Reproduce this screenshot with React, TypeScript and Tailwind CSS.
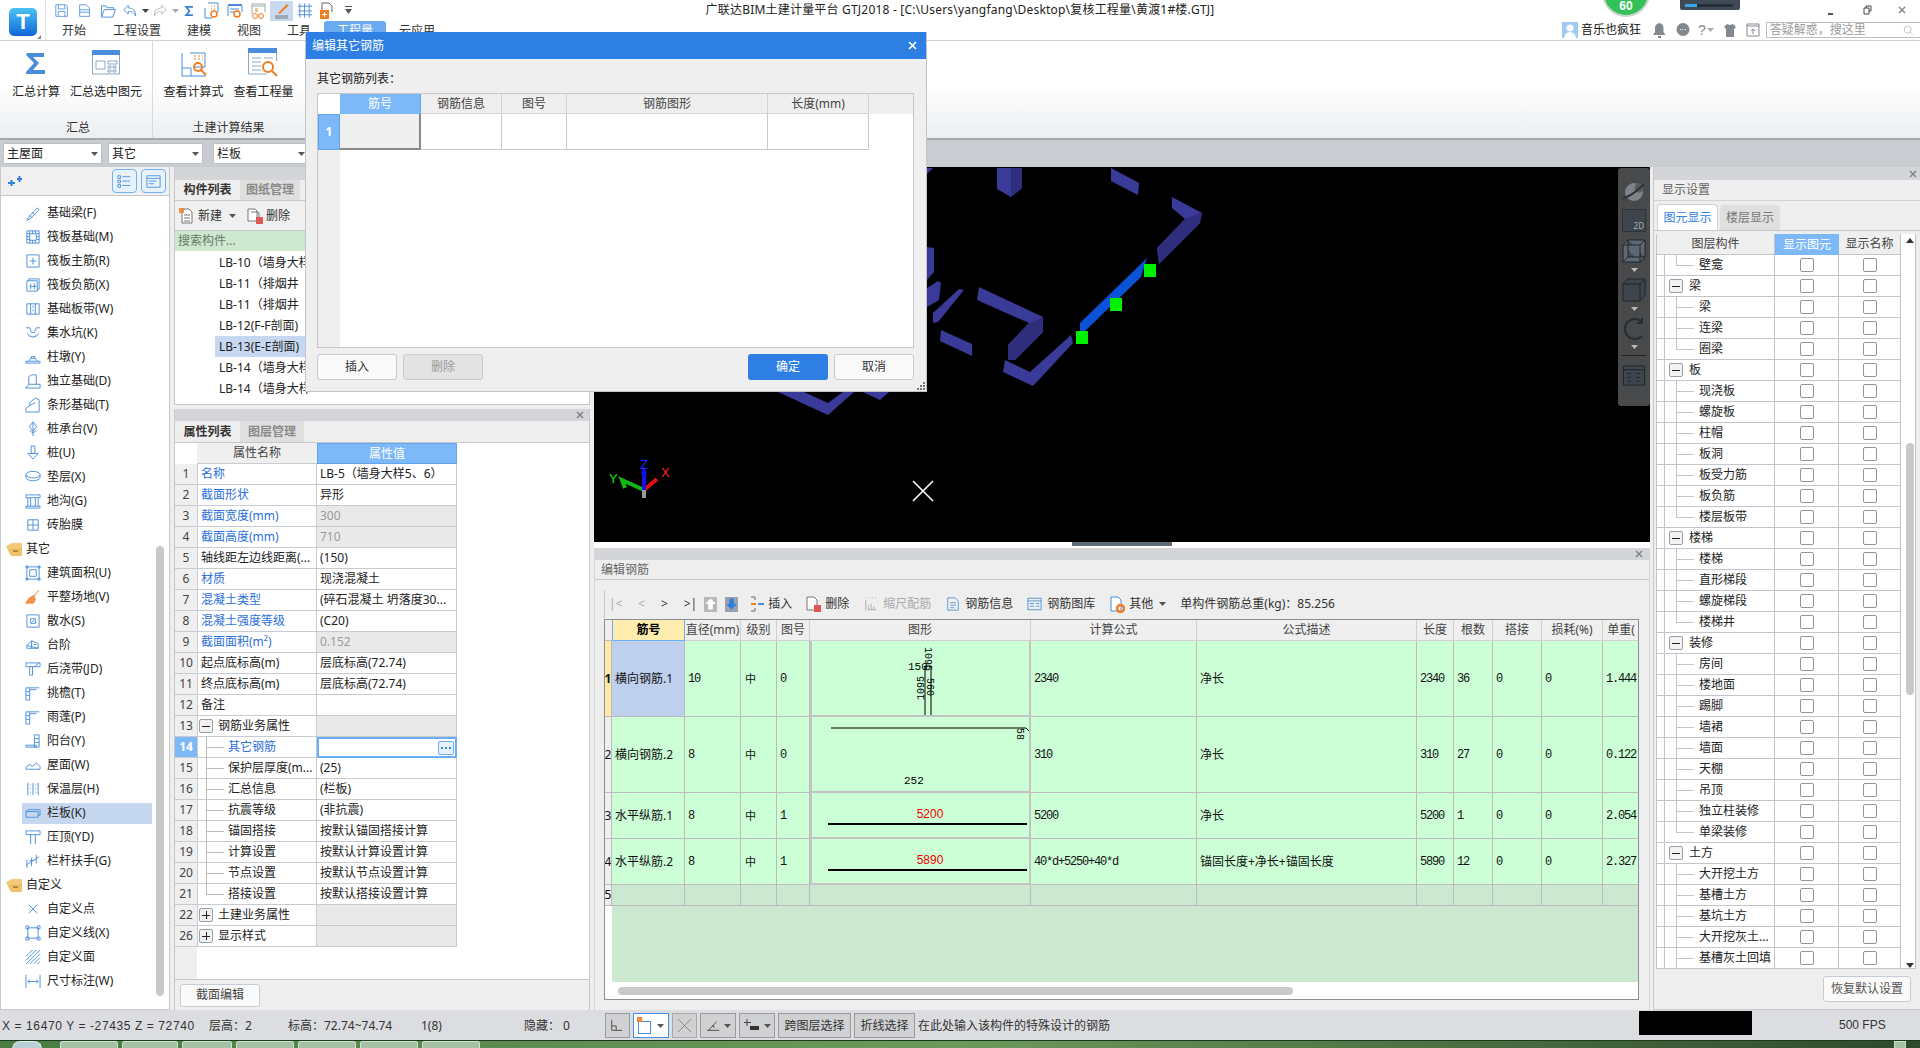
import React from "react";

const BLUE = "#4a8edb";
const ORANGE = "#ef7d22";

function Ic({ d, w = 16, h = 16, vb = "0 0 17 17", c = BLUE, sw = 1, fill = "none", className = "" }: { d: string; w?: number; h?: number; vb?: string; c?: string; sw?: number; fill?: string; className?: string }) {
  return (
    <svg width={w} height={h} viewBox={vb} className={"shrink-0 " + className}>
      <path d={d} fill={fill} stroke={c} strokeWidth={sw} />
    </svg>
  );
}

function Arrow({ c = "#555", className = "" }: { c?: string; className?: string }) {
  return (
    <svg width="7" height="4" viewBox="0 0 7 4" className={"shrink-0 " + className}>
      <path d="M0 0h7L3.5 4z" fill={c} />
    </svg>
  );
}

function CloseX({ className = "" }: { className?: string }) {
  return (
    <svg width="8" height="8" viewBox="0 0 8 8" className={"shrink-0 " + className}>
      <path d="M1 1l6 6M7 1L1 7" stroke="#7b7f86" strokeWidth="1.4" />
    </svg>
  );
}

const navIcons: Record<string, string> = {
  a: "M3 14L13 3l2 2L5 15l-3 1zM5 11l3 3M8 8l3 3",
  b: "M2 2h13v13H2zM5 5h7v7H5zM2 5h3M2 8h3M2 11h3M12 5h3M12 8h3M12 11h3M5 2v3M8 2v3M11 2v3M5 12v3M8 12v3M11 12v3",
  c: "M2 2h13v13H2zM8.5 5v7M5 8.5h7",
  d: "M2 4h11v11H2zM4 4V2h11v11h-2M6 7v6M10 7v6M5 10h7",
  e: "M2 3h13v11H2zM6 3v11M11 3v11M8.5 5v2M8.5 9v2",
  f: "M1 3h4l2 5h3l2-5h4M2 9q6.500 8 13 0M5 11h1M8 12h1M11 11h1",
  g: "M1 13h15v2H1zM4 13l2-3h5l2 3M6.500 10V8h4v2",
  h: "M1 16l3-4h12v4zM4 12V4l3-2h5v10M1 16v-1",
  i: "M1 16v-4l4-3V6l6-5 4 2v13zM5 9l6-3",
  j: "M8.500 1l4 5-4 5-4-5zM8.500 1v15M5 10l3.500 3 3.500-3",
  k: "M6.500 1h4v8h-4zM3 9h11l-5.500 6z",
  l: "M1 6a7.500 3.500 0 0 1 15 0v3a7.500 3.500 0 0 1-15 0zM1 6a7.500 3.500 0 0 0 15 0",
  m: "M1 2h15v3H1zM3 5v9M6 5v9M11 5v9M14 5v9M1 14h15v2H1z",
  n: "M3 3h11v11H3zM8.500 3v11M3 8.500h11",
  o: "M2 2h13v13H2zM5 5h7v7H5zM1 1h2v2H1zM14 1h2v2h-2zM1 14h2v2H1zM14 14h2v2h-2z",
  q: "M2 2h13v13H2zM6 6h5v5H6zM7 10l3-3",
  r: "M2 12V9l5-5 7 3v5zM7 4v8M2 9l12 3M9 8h3",
  s: "M1 2h15v4H1zM5 6v9h3V6M10 6l5-4",
  t: "M1 3h4v13H1zM1 7h4M1 11h4M5 3h10M5 5h7",
  u: "M1 13h11v2H1zM10 2h5v13h-5zM10 6h5M10 10h5",
  v: "M1 11l4-3 3 2 4-4 4 4v3H1z",
  w: "M3 2v13M8.500 2v13M14 2v13M5 4h1M5 8h1M5 12h1M11 4h1M11 8h1M11 12h1",
  x: "M1 7h13v6H1zM14 5h2v6h-2M1 7l2-2h11",
  y: "M1 2h15v4H1zM6 6v10M11 6v10",
  z: "M2 7v9M7 5v9M12 2v9M1 13l14-9M5 8h5",
  A: "M4 4l9 9M13 4l-9 9",
  B: "M3 3h11v11H3zM1 1h3v3H1zM13 1h3v3h-3zM1 13h3v3H1zM13 13h3v3h-3z",
  C: "M1 8l7-7M1 12L12 1M1 16L16 1M5 16L16 5M9 16l7-7M13 16l3-3",
  D: "M1 2v14M16 2v14M3 9h11M3 9l2-2M3 9l2 2M14 9l-2-2M14 9l-2 2",
};

const navData: [string, string][] = [
  ["基础梁(F)", "a"], ["筏板基础(M)", "b"], ["筏板主筋(R)", "c"], ["筏板负筋(X)", "d"], ["基础板带(W)", "e"], ["集水坑(K)", "f"], ["柱墩(Y)", "g"],
  ["独立基础(D)", "h"], ["条形基础(T)", "i"], ["桩承台(V)", "j"], ["桩(U)", "k"], ["垫层(X)", "l"], ["地沟(G)", "m"], ["砖胎膜", "n"],
  ["其它", "F"], ["建筑面积(U)", "o"], ["平整场地(V)", "P"], ["散水(S)", "q"], ["台阶", "r"], ["后浇带(JD)", "s"], ["挑檐(T)", "t"], ["雨蓬(P)", "t"],
  ["阳台(Y)", "u"], ["屋面(W)", "v"], ["保温层(H)", "w"], ["栏板(K)", "x"], ["压顶(YD)", "y"], ["栏杆扶手(G)", "z"],
  ["自定义", "F"], ["自定义点", "A"], ["自定义线(X)", "B"], ["自定义面", "C"], ["尺寸标注(W)", "D"],
];

function Folder() {
  return (
    <svg width="17" height="13" viewBox="0 0 17 13" className="shrink-0">
      <path d="M0 3l6-3h10v12H4z" fill="#f2c97a" />
      <path d="M3 5h13v8H5z" fill="#eec06a" />
      <path d="M7 7h5v2H7z" fill="#b98a38" />
    </svg>
  );
}

function Nav() {
  return (
    <div className="w-[170px] shrink-0 bg-white border-r border-l border-b border-[#c6c8cc] flex flex-col relative">
      <div className="h-[29px] bg-[#f0f0f0] border-b border-[#c6c8cc] flex items-center pl-[7px]">
        <svg width="14" height="11" viewBox="0 0 14 11" className="shrink-0">
          <path d="M0 7h7M3.500 4v6M9 3h5M11.500 0v6" stroke="#2f7fdc" strokeWidth="2" />
        </svg>
        <div className="ml-[90px] w-[25px] h-[24px] rounded-[4px] border border-[#6fb3f5] bg-[#e8f2fc] flex items-center justify-center">
          <Ic d="M1 2h3v3H1zM1 7h3v3H1zM1 12h3v3H1zM6 3h9M6 8h9M6 13h9" w={15} h={15} />
        </div>
        <div className="ml-[4px] w-[25px] h-[24px] rounded-[4px] border border-[#6fb3f5] bg-[#e8f2fc] flex items-center justify-center">
          <Ic d="M1 2h15v13H1zM1 5h15M3 8h9M3 11h6" w={15} h={15} />
        </div>
      </div>
      <div className="flex flex-col pt-[5px]">
        {navData.map(([t, k]) => {
          if (k === "F")
            return (
              <div key={t} className="h-[24px] flex items-center pl-[5px] text-[12px] text-[#222]">
                <Folder />
                <span className="ml-[3px]">{t}</span>
              </div>
            );
          const sel = t === "栏板(K)";
          return (
            <div key={t} className={"h-[24px] flex items-center pl-[21px] text-[12px] text-[#222]"}>
              <div className={"w-[130px] h-[21px] flex items-center pl-[3px] " + (sel ? "bg-[#c6d8f0]" : "")}>
                {k === "P" ? (
                  <Ic d="M15 1L9 8M9 7L4 10l-3 5h8l2-4z" c={ORANGE} fill="#f29552" />
                ) : (
                  <Ic d={navIcons[k]} />
                )}
                <span className="ml-[6px] whitespace-nowrap">{t}</span>
              </div>
            </div>
          );
        })}
      </div>
      <div className="absolute left-[155px] top-[379px] w-[8px] h-[450px] rounded-[4px] bg-[#c9c9c9]" />
    </div>
  );
}

const listItems = ["LB-10（墙身大样", "LB-11（排烟井", "LB-11（排烟井", "LB-12(F-F剖面)", "LB-13(E-E剖面)", "LB-14（墙身大样", "LB-14（墙身大样"];

function MemberPanel() {
  return (
    <div className="h-[238px] shrink-0 bg-white border border-[#c6c8cc] border-t-0 flex flex-col">
      <div className="h-[13px] bg-[#d3d5d9]" />
      <div className="h-[21px] bg-[#eeeeee] border-b border-[#c6c8cc] flex text-[12px]">
        <div className="w-[65px] h-full flex items-center justify-center font-bold text-[#333]">构件列表</div>
        <div className="w-[60px] h-full flex items-center justify-center bg-[#dfdfdf] text-[#8a8a8a] font-bold">图纸管理</div>
      </div>
      <div className="h-[30px] pt-[1px] bg-[#f0f0f0] border-b border-[#c6c8cc] flex items-center pl-[4px] text-[12px] text-[#333]">
        <svg width="16" height="16" viewBox="0 0 16 16" className="shrink-0">
          <path d="M3 1h7l3 3v11H3zM5 7h6M5 10h6M5 13h6" fill="#fff" stroke="#777" />
          <path d="M0 0h5v5H0z" fill={ORANGE} opacity=".8" />
        </svg>
        <span className="ml-[3px]">新建</span>
        <Arrow className="ml-[7px]" />
        <svg width="16" height="16" viewBox="0 0 16 16" className="ml-[11px] shrink-0">
          <path d="M1 1h7l2 2v10H1z" fill="#fff" stroke="#777" />
          <path d="M4 4h7l1 1v5" fill="none" stroke="#777" />
          <rect x="9" y="9" width="7" height="7" fill="#e05555" />
        </svg>
        <span className="ml-[3px]">删除</span>
      </div>
      <div className="h-[20px] bg-[#cde8cf] flex items-center pl-[3px] text-[12px] text-[#6a7a6a]">搜索构件...</div>
      <div className="flex flex-col pl-[40px] pt-[1px] text-[12px] text-[#222]">
        {listItems.map((t, i) => (
          <div key={i} className={"h-[21px] flex items-center pl-[4px] whitespace-nowrap " + (i === 4 ? "bg-[#c6d8f0]" : "")}>
            {t}
          </div>
        ))}
      </div>
    </div>
  );
}

type P = { n: string; name: string; val?: string; blue?: boolean; grey?: boolean; kind?: "minus" | "plus" | "leaf" | "last"; sel?: boolean };
const props: P[] = [
  { n: "1", name: "名称", val: "LB-5（墙身大样5、6）", blue: true },
  { n: "2", name: "截面形状", val: "异形", blue: true },
  { n: "3", name: "截面宽度(mm)", val: "300", blue: true, grey: true },
  { n: "4", name: "截面高度(mm)", val: "710", blue: true, grey: true },
  { n: "5", name: "轴线距左边线距离(...", val: "(150)" },
  { n: "6", name: "材质", val: "现浇混凝土", blue: true },
  { n: "7", name: "混凝土类型", val: "(碎石混凝土 坍落度30...", blue: true },
  { n: "8", name: "混凝土强度等级", val: "(C20)", blue: true },
  { n: "9", name: "截面面积(m²)", val: "0.152", blue: true, grey: true },
  { n: "10", name: "起点底标高(m)", val: "层底标高(72.74)" },
  { n: "11", name: "终点底标高(m)", val: "层底标高(72.74)" },
  { n: "12", name: "备注", val: "" },
  { n: "13", name: "钢筋业务属性", kind: "minus", grey: true },
  { n: "14", name: "其它钢筋", kind: "leaf", blue: true, sel: true },
  { n: "15", name: "保护层厚度(m...", val: "(25)", kind: "leaf" },
  { n: "16", name: "汇总信息", val: "(栏板)", kind: "leaf" },
  { n: "17", name: "抗震等级", val: "(非抗震)", kind: "leaf" },
  { n: "18", name: "锚固搭接", val: "按默认锚固搭接计算", kind: "leaf" },
  { n: "19", name: "计算设置", val: "按默认计算设置计算", kind: "leaf" },
  { n: "20", name: "节点设置", val: "按默认节点设置计算", kind: "leaf" },
  { n: "21", name: "搭接设置", val: "按默认搭接设置计算", kind: "last" },
  { n: "22", name: "土建业务属性", kind: "plus", grey: true },
  { n: "26", name: "显示样式", kind: "plus", grey: true },
];

function Box({ plus = false, className = "" }: { plus?: boolean; className?: string }) {
  return (
    <div className={"w-[14px] h-[14px] shrink-0 rounded-[2px] border border-[#9ba0a6] bg-[#f2f2f2] flex items-center justify-center relative " + className}>
      <div className="w-[8px] h-[1px] bg-[#222]" />
      {plus && <div className="absolute w-[1px] h-[8px] bg-[#222]" />}
    </div>
  );
}

function PropRow({ p }: { p: P }) {
  const isLeaf = p.kind === "leaf" || p.kind === "last";
  return (
    <div className="grid grid-cols-[22px_120px_140px] w-[282px] h-[21px] text-[12px] leading-[20px]">
      <div className={"border-b border-[#c8ccd2] flex items-center justify-center " + (p.sel ? "bg-[#7db8f9] text-white font-bold" : "bg-[#efefef] text-[#444]")}>{p.n}</div>
      <div className={"border-b border-r border-l border-[#c8ccd2] bg-white flex items-center whitespace-nowrap overflow-hidden h-[21px] " + (p.blue ? "text-[#2b6fdc]" : "text-[#222]")}>
        {isLeaf && (
          <>
            <div className={"ml-[8px] w-[1px] bg-[#bbb] " + (p.kind === "last" ? "h-[11px] self-start" : "h-[21px]")} />
            <div className="w-[17px] h-[1px] bg-[#bbb]" />
            <span className="ml-[4px]">{p.name}</span>
          </>
        )}
        {(p.kind === "minus" || p.kind === "plus") && (
          <>
            <Box plus={p.kind === "plus"} className="ml-[1px]" />
            <span className="ml-[5px]">{p.name}</span>
          </>
        )}
        {!p.kind && <span className="ml-[3px]">{p.name}</span>}
      </div>
      {p.sel ? (
        <div className="border-2 border-[#6aaef5] bg-white flex items-center justify-end pr-[1px]">
          <div className="w-[16px] h-[14px] rounded-[2px] border border-[#6aaef5] bg-[#e8f2fc] flex items-center justify-center gap-[2px]">
            <div className="w-[2px] h-[2px] bg-[#3b82d8]" />
            <div className="w-[2px] h-[2px] bg-[#3b82d8]" />
            <div className="w-[2px] h-[2px] bg-[#3b82d8]" />
          </div>
        </div>
      ) : (
        <div className={"border-b border-r border-[#c8ccd2] flex items-center pl-[3px] whitespace-nowrap overflow-hidden " + (p.grey ? "bg-[#e9e9e9] text-[#9a9a9a]" : "bg-white text-[#222]")}>{p.val}</div>
      )}
    </div>
  );
}

function PropPanel() {
  return (
    <div className="flex-1 flex flex-col bg-[#eeeeee] border-x border-[#c6c8cc] min-h-0">
      <div className="h-[12px] bg-[#d3d5d9] flex items-center justify-end pr-[5px]">
        <CloseX />
      </div>
      <div className="h-[22px] bg-[#eeeeee] border-b border-[#c6c8cc] flex text-[12px]">
        <div className="w-[65px] h-full flex items-center justify-center font-bold text-[#333]">属性列表</div>
        <div className="w-[64px] h-full flex items-center justify-center bg-[#dfdfdf] text-[#8a8a8a] font-bold">图层管理</div>
      </div>
      <div className="h-[537px] bg-white border-b border-[#c6c8cc] flex flex-col relative">
        <div className="absolute left-0 top-0 bottom-0 w-[22px] bg-[#efefef]" />
        <div className="grid grid-cols-[22px_120px_140px] w-[282px] h-[21px] text-[12px] relative">
          <div className="bg-white" />
          <div className="bg-[#efefef] border-b border-[#c8ccd2] flex items-center justify-center text-[#444]">属性名称</div>
          <div className="bg-[#7db8f9] text-white flex items-center justify-center border border-[#62a3ee]">属性值</div>
        </div>
        <div className="flex flex-col relative">
          {props.map((p) => (
            <PropRow key={p.n} p={p} />
          ))}
        </div>
      </div>
      <div className="flex-1 flex items-center pl-[5px]">
        <div className="w-[80px] h-[23px] rounded-[3px] border border-[#c4ccd8] bg-[#fafafa] flex items-center justify-center text-[12px] text-[#444]">截面编辑</div>
      </div>
    </div>
  );
}

function Scene() {
  const main = "#3a3a98";
  const dark = "#2e2e7c";
  return (
    <svg viewBox="594 167 1056 375" width="1056" height="375" className="block">
      <rect x="594" y="167" width="1056" height="375" fill="#000" />
      <path d="M997 168h25v20l-11 9-14-8z" fill={main} />
      <path d="M1011 168h11v20l-11 9z" fill={dark} />
      <path d="M927 168h6l-6 6z" fill={main} />
      <path d="M1111 168l28 15-1 12-27-14z" fill={main} />
      <path d="M1172 197l30 16-2 10-41 41-2-16 28-29-13-11z" fill={main} />
      <path d="M1200 223l-41 41-2-16 28-29 16-6z" fill={dark} />
      <path d="M1147 258l-6 19-57 55h-4v-9z" fill="#0b52d6" />
      <path d="M1071 335l2 8-40 43-30-14 2-12 25 12z" fill={main} />
      <path d="M979 287l64 30v15l-28 28h-7v-15l21-22-52-23z" fill={main} />
      <path d="M1043 317v15l-28 28h-7v-15l21-22z" fill={dark} />
      <path d="M941 330l31 14v12l-32-15z" fill={main} />
      <path d="M959 289l5 1-26 32-5 1v-10z" fill={main} />
      <path d="M927 247l7 1v24l-7 8z" fill={main} />
      <path d="M927 288l11-7 3 2-2 17-12 7z" fill={main} />
      <path d="M778 392l50 23 26-23h-11l-15 11-24-11z" fill={main} />
      <path d="M863 392l17 8 9-8z" fill={main} />
      <rect x="1144" y="264" width="12" height="13" fill="#00f000" />
      <rect x="1110" y="298" width="12" height="13" fill="#00f000" />
      <rect x="1076" y="331" width="12" height="13" fill="#00f000" />
      <path d="M644 490l-22-10 3 8" fill="none" stroke="#12b812" strokeWidth="4" />
      <path d="M644 490l13-11" fill="none" stroke="#e01010" strokeWidth="4" />
      <path d="M644 498v-8" stroke="#999" strokeWidth="4" />
      <path d="M644 490v-16" stroke="#1212e8" strokeWidth="4" />
      <path d="M644 466l-3 8h6z" fill="#1212e8" />
      <text x="609" y="483" fontSize="13" fill="#10e010" fontFamily="Liberation Sans">Y</text>
      <text x="640" y="469" fontSize="13" fill="#2222ff" fontFamily="Liberation Sans">Z</text>
      <text x="661" y="477" fontSize="13" fill="#ff2020" fontFamily="Liberation Sans">X</text>
      <path d="M913 481l20 20M933 481l-20 20" stroke="#fff" strokeWidth="1.6" />
    </svg>
  );
}

function ToolStrip() {
  return (
    <div className="absolute right-0 top-[1px] w-[32px] h-[238px] bg-[#47494b] rounded-[3px] flex flex-col items-center pt-[13px]">
      <svg width="26" height="22" viewBox="0 0 26 22" className="shrink-0">
        <circle cx="13" cy="11" r="9" fill="#7d8388" />
        <circle cx="18" cy="7" r="4.500" fill="#555b60" />
        <path d="M2 17Q10 16 23 3" stroke="#2f3235" strokeWidth="2" fill="none" />
      </svg>
      <div className="mt-[6px] w-[24px] h-[23px] border border-[#2f3234] bg-[#3e454c] rounded-[1px] flex items-end justify-end pr-[1px] text-[8px] leading-[10px] text-[#aab0b5]">2D</div>
      <Ic d="M1 6l5-5h17v17l-5 5H1zM1 6h17v17M18 6l5-5M6 1v17h17M6 18l-5 5" w={24} h={24} vb="0 0 24 24" c="#20262b" fill="#5d6873" className="mt-[7px]" />
      <Arrow c="#bbb" className="mt-[5px]" />
      <Ic d="M1 6l5-5h17v17l-5 5H1zM1 6h17v17M18 6l5-5" w={24} h={24} vb="0 0 24 24" c="#20262b" fill="#3e454c" className="mt-[6px]" />
      <Arrow c="#bbb" className="mt-[5px]" />
      <Ic d="M20 5A10 10 0 1 0 20 19M20 1v5h-5" w={24} h={24} vb="0 0 24 24" c="#2a2d30" sw={2} className="mt-[6px]" />
      <Arrow c="#bbb" className="mt-[4px]" />
      <div className="mt-[6px] w-[24px] h-[1px] bg-[#222]" />
      <Ic d="M1 3h22v20H1zM1 7h22M5 11h4M14 11h4M5 15h4M14 15h4M5 19h4M14 19h4" w={24} h={23} vb="0 0 24 24" c="#20262b" fill="#3e454c" className="mt-[7px]" />
    </div>
  );
}

const cols = "grid grid-cols-[7px_73px_56px_36px_33px_221px_166px_220px_37px_39px_49px_61px_37px] w-[1035px]";
const cellB = "border-r border-b border-[#bcbcbc] flex items-center overflow-hidden whitespace-nowrap";
const mono = "font-['Liberation_Mono','Noto_Sans_CJK_SC',monospace] text-[12px] tracking-[-1.2px]";

type G = { id: string; name: string; d: string; lvl: string; fig: string; f: string; desc: string; len: string; cnt: string; w: string; shape: React.ReactNode };

const gridRows: G[] = [
  {
    id: "1", name: "横向钢筋.1", d: "10", lvl: "中", fig: "0", f: "2340", desc: "净长", len: "2340", cnt: "36", w: "1.444",
    shape: (
      <svg viewBox="811 640 220 75" width="220" height="75" className="block">
        <path d="M924 665v49M930 665v49M924 665h6" stroke="#000" fill="none" />
        <text x="907" y="669" fontSize="11" fontFamily="Liberation Mono">150</text>
        <text transform="translate(924,646) rotate(90)" fontSize="10" fontFamily="Liberation Mono">1095</text>
        <text transform="translate(923,699) rotate(-90)" fontSize="10" fontFamily="Liberation Mono">1095</text>
        <text transform="translate(926,677) rotate(90)" fontSize="10" fontFamily="Liberation Mono">560</text>
      </svg>
    ),
  },
  {
    id: "2", name: "横向钢筋.2", d: "8", lvl: "中", fig: "0", f: "310", desc: "净长", len: "310", cnt: "27", w: "0.122",
    shape: (
      <svg viewBox="811 716 220 75" width="220" height="75" className="block">
        <path d="M830 727h195l3 3" stroke="#000" fill="none" />
        <text transform="translate(1016,727) rotate(90)" fontSize="10" fontFamily="Liberation Mono">58</text>
        <text x="903" y="783" fontSize="11" fontFamily="Liberation Mono">252</text>
      </svg>
    ),
  },
  {
    id: "3", name: "水平纵筋.1", d: "8", lvl: "中", fig: "1", f: "5200", desc: "净长", len: "5200", cnt: "1", w: "2.054",
    shape: (
      <svg viewBox="811 792 220 45" width="220" height="45" className="block">
        <text x="929" y="817" fontSize="12" fill="#f00000" textAnchor="middle" fontFamily="Liberation Sans">5200</text>
        <path d="M827 823h199" stroke="#000" strokeWidth="2" />
      </svg>
    ),
  },
  {
    id: "4", name: "水平纵筋.2", d: "8", lvl: "中", fig: "1", f: "40*d+5250+40*d", desc: "锚固长度+净长+锚固长度", len: "5890", cnt: "12", w: "2.327",
    shape: (
      <svg viewBox="811 838 220 45" width="220" height="45" className="block">
        <text x="929" y="863" fontSize="12" fill="#f00000" textAnchor="middle" fontFamily="Liberation Sans">5890</text>
        <path d="M827 869h199" stroke="#000" strokeWidth="2" />
      </svg>
    ),
  },
];

const heads = ["筋号", "直径(mm)", "级别", "图号", "图形", "计算公式", "公式描述", "长度", "根数", "搭接", "损耗(%)", "单重("];

function EditGrid() {
  return (
    <div className="flex-1 ml-[9px] mr-[10px] border border-[#8b8e93] bg-white flex flex-col min-h-0 overflow-hidden">
      <div className={cols + " h-[21px] text-[12px] text-[#444] bg-[#efefef]"}>
        <div className="border-b border-[#bcbcbc]" />
        {heads.map((h, i) => (
          <div key={h} className={"border-r border-b flex items-center justify-center overflow-hidden whitespace-nowrap " + (i === 0 ? "bg-[#ffedb0] border-[#6aaef5] border-l text-black font-bold" : "border-[#d0d0d0]")}>{h}</div>
        ))}
      </div>
      {gridRows.map((r, i) => (
        <div key={r.id} className={cols + " text-[12px] text-[#111] bg-[#ccffd6] " + (i < 2 ? "h-[76px]" : "h-[46px]")}>
          <div className={cellB + " justify-center font-bold " + (i === 0 ? "bg-[#ffe9a8]" : "bg-[#efefef] font-normal")}>{r.id}</div>
          <div className={cellB + " pl-[3px] " + (i === 0 ? "bg-[#bfd0ee]" : "")}>{r.name}</div>
          <div className={cellB + " pl-[3px] " + mono}>{r.d}</div>
          <div className={cellB + " pl-[4px] text-[11px]"}>{r.lvl}</div>
          <div className={cellB + " pl-[3px] " + mono}>{r.fig}</div>
          <div className="border-2 border-[#c4c4c4] border-t-0 overflow-hidden">{r.shape}</div>
          <div className={cellB + " pl-[3px] " + mono}>{r.f}</div>
          <div className={cellB + " pl-[3px]"}>{r.desc}</div>
          <div className={cellB + " pl-[3px] " + mono}>{r.len}</div>
          <div className={cellB + " pl-[3px] " + mono}>{r.cnt}</div>
          <div className={cellB + " pl-[3px] " + mono}>0</div>
          <div className={cellB + " pl-[3px] " + mono}>0</div>
          <div className={cellB + " pl-[3px] " + mono}>{r.w}</div>
        </div>
      ))}
      <div className={cols + " h-[21px] text-[12px] bg-[#cde8d0]"}>
        <div className={cellB + " bg-[#efefef] justify-center"}>5</div>
        {Array.from({ length: 12 }).map((_, i) => (
          <div key={i} className="border-r border-b border-[#bcbcbc]" />
        ))}
      </div>
      <div className="flex-1 ml-[7px] bg-[#cde8d0]" />
      <div className="h-[17px] shrink-0 flex items-center pl-[13px]">
        <div className="w-[675px] h-[8px] rounded-[4px] bg-[#c9c9c9]" />
      </div>
    </div>
  );
}

function EditToolbar() {
  return (
    <div className="h-[39px] shrink-0 flex items-center pt-[9px] pl-[9px] text-[12px] text-[#333] whitespace-nowrap">
      <div className="w-[1px] h-[28px] bg-[#c8c8c8] mr-[4px]" />
      <span className="text-[#aaa] w-[12px]">|&lt;</span>
      <span className="text-[#aaa] ml-[17px]">&lt;</span>
      <span className="text-[#333] ml-[16px]">&gt;</span>
      <span className="text-[#333] ml-[16px]">&gt;|</span>
      <div className="ml-[7px] w-[13px] h-[15px] bg-[#b8b8b8] flex items-center justify-center">
        <Ic d="M6 1l5 5H8v6H4V6H1z" w={11} h={12} vb="0 0 12 13" c="#fff" fill="#fff" />
      </div>
      <div className="ml-[8px] w-[13px] h-[15px] bg-[#9aa3ad] flex items-center justify-center">
        <Ic d="M4 1h4v6h3l-5 5-5-5h3z" w={11} h={12} vb="0 0 12 13" c="#2f7fdc" fill="#2f7fdc" />
      </div>
      <svg width="14" height="16" viewBox="0 0 14 16" className="ml-[12px] shrink-0">
        <path d="M1 1h4v3M1 15h4v-3" stroke="#666" fill="none" />
        <path d="M1 8h5" stroke={ORANGE} strokeWidth="2" />
        <path d="M8 8h6" stroke="#4a8edb" strokeWidth="2" />
      </svg>
      <span className="ml-[4px]">插入</span>
      <svg width="15" height="16" viewBox="0 0 15 16" className="ml-[14px] shrink-0">
        <path d="M1 1h7l3 3v10H1z" stroke="#777" fill="#fff" />
        <rect x="8" y="9" width="7" height="7" fill="#e05555" />
      </svg>
      <span className="ml-[4px]">删除</span>
      <Ic d="M2 4v12M2 1v1M5 1h1M9 1h1M13 1v1M5 15V10M8 15V8M11 15v-4M14 15h-9" w={15} h={16} c="#aaa" className="ml-[15px]" />
      <span className="ml-[4px] text-[#aaa]">缩尺配筋</span>
      <Ic d="M2 1h9l4 4v11H2zM5 7h7M5 10h7M5 13h5" w={14} h={16} className="ml-[15px]" />
      <span className="ml-[5px]">钢筋信息</span>
      <Ic d="M1 2h15v13H1zM1 5h15M3 8h5M3 11h5M10 8h4M10 11h4" w={15} h={16} className="ml-[14px]" />
      <span className="ml-[5px]">钢筋图库</span>
      <svg width="15" height="17" viewBox="0 0 15 17" className="ml-[15px] shrink-0">
        <path d="M1 1h7l3 3v11H1z" stroke={BLUE} fill="#fff" />
        <circle cx="10.500" cy="12.500" r="3.500" fill="none" stroke={ORANGE} strokeWidth="2.500" />
      </svg>
      <span className="ml-[4px]">其他</span>
      <Arrow className="ml-[6px]" />
      <span className="ml-[14px]">单构件钢筋总重(kg)：85.256</span>
    </div>
  );
}

function EditPanel() {
  return (
    <div className="flex-1 bg-[#eeeeee] flex flex-col min-h-0 border-x border-[#d6d6d6]">
      <div className="h-[12px] shrink-0 bg-[#d3d5d9] flex items-center justify-end pr-[6px]">
        <CloseX />
      </div>
      <div className="h-[20px] shrink-0 border-b border-[#c6c8cc] flex items-center pl-[6px] text-[12px] text-[#666]">编辑钢筋</div>
      <EditToolbar />
      <EditGrid />
      <div className="h-[10px] shrink-0" />
    </div>
  );
}

const layerRows: [string, "g" | "l" | "e"][] = [
  ["壁龛", "e"], ["梁", "g"], ["梁", "l"], ["连梁", "l"], ["圈梁", "e"], ["板", "g"], ["现浇板", "l"], ["螺旋板", "l"], ["柱帽", "l"], ["板洞", "l"], ["板受力筋", "l"], ["板负筋", "l"], ["楼层板带", "e"],
  ["楼梯", "g"], ["楼梯", "l"], ["直形梯段", "l"], ["螺旋梯段", "l"], ["楼梯井", "e"], ["装修", "g"], ["房间", "l"], ["楼地面", "l"], ["踢脚", "l"], ["墙裙", "l"], ["墙面", "l"], ["天棚", "l"], ["吊顶", "l"], ["独立柱装修", "l"], ["单梁装修", "e"],
  ["土方", "g"], ["大开挖土方", "l"], ["基槽土方", "l"], ["基坑土方", "l"], ["大开挖灰土...", "l"], ["基槽灰土回填", "l"],
];

function Check() {
  return <div className="w-[14px] h-[14px] rounded-[2px] border border-[#8f959b] bg-white" />;
}

function RightPanel() {
  return (
    <div className="w-[267px] ml-[3px] shrink-0 bg-[#eeeeee] border-l border-b border-[#c6c8cc] flex flex-col">
      <div className="h-[13px] shrink-0 bg-[#d3d5d9] flex items-center justify-end pr-[3px]">
        <CloseX />
      </div>
      <div className="h-[21px] shrink-0 border-b border-[#d0d2d6] flex items-center pl-[8px] text-[12px] text-[#666]">显示设置</div>
      <div className="h-[30px] shrink-0 pt-[5px] pl-[3px] flex items-end border-b border-[#c6c8cc] text-[12px]">
        <div className="w-[61px] h-[26px] bg-white rounded-t-[4px] border border-b-0 border-[#d0d2d6] flex items-center justify-center text-[#2f80e6]">图元显示</div>
        <div className="w-[60px] h-[25px] ml-[2px] bg-[#dfdfdf] rounded-t-[4px] flex items-center justify-center text-[#777]">楼层显示</div>
      </div>
      <div className="mt-[3px] ml-[2px] mr-[4px] h-[735px] shrink-0 bg-white border-x border-b border-[#c2c6cc] relative flex flex-col overflow-hidden">
        <div className="grid grid-cols-[118px_64px_62px] w-[244px] h-[21px] shrink-0 text-[12px] bg-[#efefef] text-[#444]">
          <div className="border-b border-r border-[#c2c6cc] flex items-center justify-center">图层构件</div>
          <div className="bg-[#7db8f9] text-white flex items-center justify-center">显示图元</div>
          <div className="border-b border-r border-[#c2c6cc] flex items-center justify-center">显示名称</div>
        </div>
        {layerRows.map(([t, k], i) => (
          <div key={i} className="grid grid-cols-[118px_64px_62px] w-[244px] h-[21px] shrink-0 text-[12px] text-[#222]">
            <div className="border-b border-r border-[#c2c6cc] flex items-center whitespace-nowrap overflow-hidden">
              <div className="w-[8px] h-[21px] border-r border-[#c2c6cc] shrink-0" />
              {k === "g" ? (
                <>
                  <Box className="ml-[4px]" />
                  <span className="ml-[6px]">{t}</span>
                </>
              ) : (
                <>
                  <div className={"ml-[11px] w-[1px] bg-[#c2c6cc] shrink-0 " + (k === "e" ? "h-[11px] self-start" : "h-[21px]")} />
                  <div className="w-[17px] h-[1px] bg-[#c2c6cc] shrink-0" />
                  <span className="ml-[5px]">{t}</span>
                </>
              )}
            </div>
            <div className="border-b border-r border-[#c2c6cc] flex items-center justify-center">
              <Check />
            </div>
            <div className="border-b border-r border-[#c2c6cc] flex items-center justify-center">
              <Check />
            </div>
          </div>
        ))}
        <svg width="8" height="5" viewBox="0 0 8 5" className="absolute left-[249px] top-[4px]">
          <path d="M0 5h8L4 0z" fill="#333" />
        </svg>
        <div className="absolute left-[249px] top-[209px] w-[8px] h-[252px] rounded-[4px] bg-[#c9c9c9]" />
        <svg width="8" height="5" viewBox="0 0 8 5" className="absolute left-[249px] top-[729px]">
          <path d="M0 0h8L4 5z" fill="#333" />
        </svg>
      </div>
      <div className="flex-1 flex items-center justify-end pr-[9px]">
        <div className="w-[88px] h-[26px] rounded-[3px] border border-[#c4ccd8] bg-[#fafafa] flex items-center justify-center text-[12px] text-[#555]">恢复默认设置</div>
      </div>
    </div>
  );
}

function TopIcons() {
  return (
    <div className="h-[21px] flex items-center">
      <Ic d="M1 1h12l2 2v12H1zM4 1v5h8V1M4 15V9h8v6" w={14} h={16} className="ml-[9px]" />
      <Ic d="M2 1h8l4 4v10H2zM2 7h12M2 10h12" w={14} h={16} className="ml-[9px]" />
      <Ic d="M1 15V3h5l1 2h7v2M1 15l3-8h12l-3 8z" w={17} h={16} className="ml-[8px]" />
      <Ic d="M6 2L1 7l5 5V9c4 0 7 1 8 5 1-6-3-9-8-9z" w={15} h={16} className="ml-[6px]" />
      <Arrow c="#444" className="ml-[4px]" />
      <Ic d="M11 2l5 5-5 5V9C7 9 4 10 3 14 2 8 6 5 11 5z" w={15} h={16} c="#b0b4ba" className="ml-[3px]" />
      <Arrow c="#aaa" className="ml-[5px]" />
      <Ic d="M13 3H3l5 6-5 6h10" w={11} h={14} vb="0 0 16 18" sw={2.500} c="#3a80d0" className="ml-[5px]" />
      <svg width="16" height="18" viewBox="0 0 16 18" className="ml-[9px] shrink-0">
        <path d="M4 1h10v9M1 6v10h7" stroke={BLUE} fill="none" />
        <path d="M7 4h1M10 4h1M7 7h1M10 7h1" stroke={ORANGE} />
        <circle cx="10" cy="12" r="3" stroke={ORANGE} fill="none" strokeWidth="1.500" />
      </svg>
      <svg width="16" height="18" viewBox="0 0 16 18" className="ml-[7px] shrink-0">
        <path d="M1 2h14v2H1z" fill={BLUE} />
        <path d="M1 4v10M15 4v6M3 7h9M3 10h5" stroke={BLUE} fill="none" />
        <circle cx="10" cy="12" r="3" stroke={ORANGE} fill="none" strokeWidth="1.500" />
      </svg>
      <svg width="15" height="18" viewBox="0 0 15 18" className="ml-[8px] shrink-0">
        <path d="M1 2h13v2H1zM1 4v8M14 4v6" stroke="#9aa" fill="none" />
        <circle cx="4" cy="14" r="2.500" stroke={ORANGE} fill="none" />
        <circle cx="10" cy="14" r="2.500" stroke={ORANGE} fill="none" />
        <path d="M4 7h3M4 9h3" stroke={ORANGE} />
      </svg>
      <div className="ml-[4px] w-[23px] h-[20px] bg-[#c8daef] flex items-center justify-center">
        <svg width="15" height="16" viewBox="0 0 15 16" className="shrink-0">
          <path d="M4 10L13 1l1.500 1.500L6 11z" fill={ORANGE} />
          <path d="M1 13h13M1 15h13" stroke="#777" />
        </svg>
      </div>
      <Ic d="M3 1v15M8 1v15M13 1v15M1 4h15M1 9h15M1 13h15" w={16} h={17} className="ml-[4px]" />
      <svg width="14" height="17" viewBox="0 0 14 17" className="ml-[7px] shrink-0">
        <path d="M2 1h7l3 3v6M2 1v8" stroke="#666" fill="none" />
        <rect x="0" y="8" width="9" height="9" fill={ORANGE} />
        <path d="M4.500 10v5M2 12.500h5" stroke="#fff" />
      </svg>
      <svg width="7" height="9" viewBox="0 0 7 9" className="ml-[11px] shrink-0">
        <path d="M0 0h7v1H0zM0 3h7L3.500 8z" fill="#555" />
      </svg>
    </div>
  );
}

function TitleBar() {
  return (
    <div className="h-[41px] shrink-0 bg-white border-b border-[#cfd1d4] flex relative">
      <div className="w-[46px] h-[40px] border-r border-[#e4e4e4] pl-[9px] pt-[8px] shrink-0 relative">
        <div className="w-[28px] h-[28px] rounded-[5px] bg-gradient-to-b from-[#4cc2f2] to-[#1467d8] flex items-center justify-center text-white font-bold text-[22px] leading-[28px] font-['Liberation_Sans',sans-serif]">T</div>
        <svg width="4" height="4" viewBox="0 0 4 4" className="absolute left-[37px] top-[35px]">
          <path d="M4 0v4H0z" fill="#888" />
        </svg>
      </div>
      <div className="flex flex-col flex-1">
        <TopIcons />
        <div className="h-[19px] flex items-center text-[12px] text-[#333]">
          <span className="ml-[16px]">开始</span>
          <span className="ml-[27px]">工程设置</span>
          <span className="ml-[26px]">建模</span>
          <span className="ml-[26px]">视图</span>
          <span className="ml-[26px]">工具</span>
          <div className="ml-[13px] w-[62px] h-[19px] bg-[#69aaf0] rounded-t-[3px] flex items-center justify-center text-white">工程量</div>
          <span className="ml-[13px]">云应用</span>
        </div>
      </div>
      <div className="absolute left-0 right-0 top-[2px] text-center text-[12px] tracking-[0.2px] text-[#222] whitespace-nowrap">广联达BIM土建计量平台 GTJ2018 - [C:\Users\yangfang\Desktop\复核工程量\黄渡1#楼.GTJ]</div>
      <div className="absolute left-[1602px] top-[-31px] w-[48px] h-[48px] rounded-full bg-[#33c25a] border-2 border-[#cfd4d0] flex items-end justify-center text-white font-bold text-[12px] leading-[17px] font-['Liberation_Sans',sans-serif]">60</div>
      <div className="absolute left-[1680px] top-0 w-[60px] h-[10px] bg-[#3f4a55] rounded-b-[2px] flex items-center pl-[5px]">
        <div className="w-[12px] h-[3px] bg-[#37a7e8]" />
        <div className="w-[36px] h-[3px] bg-[#26303a]" />
      </div>
      <div className="absolute right-[14px] top-[5px] flex items-center">
        <div className="w-[5px] h-[2px] mt-[8px] bg-[#555]" />
        <Ic d="M1 3h5v6H1zM3 3V1h5v5H6" w={9} h={10} vb="0 0 9 10" c="#444" className="ml-[30px]" />
        <CloseX className="ml-[26px]" />
      </div>
      <div className="absolute left-[1562px] top-[22px] flex items-center">
        <svg width="16" height="16" viewBox="0 0 16 16" className="shrink-0">
          <rect width="16" height="16" fill="#9ecbf5" />
          <circle cx="8" cy="6" r="3.500" fill="#fff" />
          <path d="M2 16q1-6 6-6t6 6z" fill="#fff" />
        </svg>
        <span className="ml-[3px] text-[12px] text-[#111] whitespace-nowrap">音乐也疯狂</span>
        <svg width="13" height="15" viewBox="0 0 13 15" className="ml-[12px] shrink-0">
          <path d="M6.500 0q4 1 4 5v4l2 3H0l2-3V5q0-4 4.500-5zM5 13h3v2H5z" fill="#83888e" />
        </svg>
        <svg width="14" height="14" viewBox="0 0 14 14" className="ml-[10px] shrink-0">
          <circle cx="7" cy="6.500" r="6.500" fill="#83888e" />
          <path d="M4 6.500h1M6.500 6.500h1M9 6.500h1" stroke="#fff" />
        </svg>
        <span className="ml-[8px] text-[14px] leading-[16px] text-[#83888e] font-['Liberation_Sans',sans-serif]">?</span>
        <Arrow c="#aaa" className="ml-[1px]" />
        <svg width="12" height="13" viewBox="0 0 12 13" className="ml-[10px] shrink-0">
          <path d="M3 0l3 1 3-1 3 3-2 2v8H2V5L0 3z" fill="#83888e" />
        </svg>
        <Ic d="M1 1h12v12H1zM1 3h12M7 11V6M5 8l2-2 2 2" w={14} h={14} vb="0 0 14 14" c="#83888e" className="ml-[10px]" />
        <div className="ml-[6px] w-[155px] h-[16px] border border-[#bcc0c6] bg-white flex items-center pl-[3px] text-[12px] text-[#9a9a9a] justify-between pr-[6px]">
          <span className="whitespace-nowrap">答疑解惑，搜这里</span>
          <Ic d="M8 8m-5 0a5 5 0 1 0 10 0a5 5 0 1 0-10 0M12 12l3 3" w={12} h={12} vb="0 0 17 17" c="#aaa" />
        </div>
      </div>
    </div>
  );
}

function Ribbon() {
  return (
    <div className="h-[97px] shrink-0 bg-gradient-to-b from-white from-[45%] to-[#eceef0] flex">
      <div className="w-[153px] shrink-0 border-r border-[#d8dadc] flex flex-col items-center">
        <div className="h-[34px] flex w-full items-end">
          <svg width="20" height="23" viewBox="0 0 20 23" className="ml-[26px] shrink-0">
            <path d="M1 1h17v4H7l6 6-6 7h12v4H0v-2l8-9-8-8z" fill="#4a8edb" />
          </svg>
          <svg width="28" height="25" viewBox="0 0 28 25" className="ml-[46px] shrink-0">
            <path d="M0 0h28v5H0z" fill="#4a8edb" />
            <path d="M.5 5v19h27V5M4 11h9v8H4zM16 11h9v3h-9zM16 16h3v2h-3zM21 16h3v2h-3zM16 20h3v2h-3zM21 20h3v2h-3z" fill="none" stroke="#8ea7c4" />
          </svg>
        </div>
        <div className="mt-[9px] ml-[2px] flex text-[12px] text-[#222] whitespace-nowrap">
          <span>汇总计算</span>
          <span className="ml-[10px]">汇总选中图元</span>
        </div>
        <div className="mt-auto ml-[4px] mb-0 h-[18px] text-[12px] text-[#333]">汇总</div>
      </div>
      <div className="w-[151px] shrink-0 flex flex-col items-center">
        <div className="h-[36px] flex w-full items-end">
          <svg width="27" height="25" viewBox="0 0 27 25" className="ml-[28px] shrink-0">
            <path d="M1 1v23h24M1 16h9v8M9 1h15v14H14" fill="none" stroke="#4a8edb" />
            <path d="M13 4h2M17 4h2M21 4h1M13 7h2M17 7h2M21 7h1" stroke={ORANGE} />
            <circle cx="17" cy="15" r="4" stroke={ORANGE} strokeWidth="2" fill="none" />
            <path d="M20 18l5 5" stroke={ORANGE} strokeWidth="2" />
          </svg>
          <svg width="30" height="29" viewBox="0 0 30 29" className="ml-[40px] shrink-0">
            <path d="M0 0h29v5H0z" fill="#4a8edb" />
            <path d="M.5 5v21h18M28.500 5v8M4 10h9M4 14h9M4 18h9M4 22h9M16 10h9" fill="none" stroke="#8ea7c4" />
            <circle cx="20" cy="19" r="5" stroke={ORANGE} strokeWidth="2" fill="none" />
            <path d="M24 23l5 5" stroke={ORANGE} strokeWidth="2" />
          </svg>
        </div>
        <div className="mt-[7px] flex text-[12px] text-[#222] whitespace-nowrap">
          <span>查看计算式</span>
          <span className="ml-[10px]">查看工程量</span>
        </div>
        <div className="mt-auto mb-0 h-[18px] text-[12px] text-[#333]">土建计算结果</div>
      </div>
    </div>
  );
}

function Sel({ t, className = "" }: { t: string; className?: string }) {
  return (
    <div className={"h-[21px] bg-white border border-[#bcc0c6] rounded-[1px] flex items-center justify-between px-[3px] text-[12px] text-[#222] " + className}>
      <span>{t}</span>
      <Arrow />
    </div>
  );
}

const dlgCols = "grid grid-cols-[22px_81px_81px_65px_201px_101px] w-[551px]";

function Dialog() {
  return (
    <div className="absolute left-[305px] top-[32px] w-[622px] h-[360px] bg-[#efefef] border border-[#c0c4cc] border-t-0 flex flex-col z-10">
      <div className="h-[27px] shrink-0 bg-[#2d7fe3] flex items-center justify-between pl-[6px] pr-[9px] text-[12px] text-white">
        <span>编辑其它钢筋</span>
        <svg width="9" height="9" viewBox="0 0 9 9" className="shrink-0">
          <path d="M1 1l7 7M8 1L1 8" stroke="#fff" strokeWidth="1.600" />
        </svg>
      </div>
      <div className="h-[34px] shrink-0 flex items-center pt-[6px] pl-[11px] text-[12px] text-[#222]">其它钢筋列表：</div>
      <div className="h-[255px] shrink-0 ml-[11px] mr-[12px] border border-[#c4c6ca] bg-white flex flex-col relative">
        <div className="absolute left-0 top-[20px] bottom-0 w-[22px] bg-[#efefef]" />
        <div className={dlgCols + " h-[20px] text-[12px] text-[#444] relative"}>
          <div className="bg-white" />
          <div className="bg-[#7db8f9] text-white flex items-center justify-center border-r border-[#62a3ee]">筋号</div>
          <div className="bg-[#efefef] border-b border-r border-[#d4d4d4] flex items-center justify-center">钢筋信息</div>
          <div className="bg-[#efefef] border-b border-r border-[#d4d4d4] flex items-center justify-center">图号</div>
          <div className="bg-[#efefef] border-b border-r border-[#d4d4d4] flex items-center justify-center">钢筋图形</div>
          <div className="bg-[#efefef] border-b border-r border-[#d4d4d4] flex items-center justify-center">长度(mm)</div>
        </div>
        <div className="absolute left-[551px] right-0 top-0 h-[20px] bg-[#efefef]" />
        <div className={dlgCols + " h-[36px] relative"}>
          <div className="bg-[#7db8f9] border border-[#62a3ee] text-white font-bold text-[12px] flex items-center justify-center">1</div>
          <div className="bg-[#efefef] border-r-2 border-b-2 border-[#8a8a8a]" />
          <div className="bg-white border-b border-r border-[#c8c8c8]" />
          <div className="bg-white border-b border-r border-[#c8c8c8]" />
          <div className="bg-white border-b border-r border-[#c8c8c8]" />
          <div className="bg-white border-b border-r border-[#c8c8c8]" />
        </div>
      </div>
      <div className="ml-[11px] mr-[12px] mt-[6px] h-[26px] flex text-[12px]">
        <div className="w-[80px] h-[26px] rounded-[3px] border border-[#c4ccd8] bg-[#fafafa] flex items-center justify-center text-[#333]">插入</div>
        <div className="ml-[6px] w-[80px] h-[26px] rounded-[3px] border border-[#c4ccd8] bg-[#e3e3e3] flex items-center justify-center text-[#999]">删除</div>
        <div className="ml-auto w-[80px] h-[26px] rounded-[3px] bg-[#2d7fe3] flex items-center justify-center text-white">确定</div>
        <div className="ml-[6px] w-[80px] h-[26px] rounded-[3px] border border-[#c4ccd8] bg-[#fafafa] flex items-center justify-center text-[#333]">取消</div>
      </div>
      <svg width="8" height="8" viewBox="0 0 8 8" className="absolute right-[1px] bottom-[1px]">
        <path d="M6 0h2v2H6zM3 3h2v2H3zM6 3h2v2H6zM0 6h2v2H0zM3 6h2v2H3zM6 6h2v2H6z" fill="#777" />
      </svg>
    </div>
  );
}

function SBtn({ children, className = "" }: { children: React.ReactNode; className?: string }) {
  return <div className={"h-[25px] border border-[#9b9b9b] bg-[#d0d1d3] flex items-center justify-center shrink-0 " + className}>{children}</div>;
}

function StatusBar() {
  return (
    <div className="h-[30px] shrink-0 pt-[1px] bg-[#dcdde0] flex items-center text-[12px] text-[#333] whitespace-nowrap relative">
      <span className="ml-[2px] w-[205px] font-['Liberation_Sans',sans-serif] text-[12px] tracking-[0.6px]">X = 16470 Y = -27435 Z = 72740</span>
      <span className="ml-[2px] w-[79px]">层高：2</span>
      <span className="w-[133px]">标高：72.74~74.74</span>
      <span className="w-[103px]">1(8)</span>
      <span className="w-[81px]">隐藏： 0</span>
      <SBtn className="w-[25px]">
        <Ic d="M2 2v12h12M2 9h5v5" w={15} h={15} c="#444" />
      </SBtn>
      <div className="ml-[3px] w-[36px] h-[25px] border border-[#3f93ea] bg-white flex items-center pl-[2px] shrink-0 relative">
        <div className="w-[13px] h-[13px] border border-[#4a8edb] mt-[3px] ml-[2px]" />
        <div className="absolute left-[3px] top-[3px] w-[5px] h-[5px] bg-[#f29552] border border-[#ef7d22]" />
        <Arrow className="ml-[6px]" />
      </div>
      <SBtn className="ml-[3px] w-[25px] bg-[#c9cacc] border-[#aaa]">
        <Ic d="M2 2l13 13M15 2L2 15" w={17} h={17} c="#8a8a8a" />
      </SBtn>
      <SBtn className="ml-[3px] w-[36px]">
        <Ic d="M1 14h14M3 14L12 4M7 9h2v2" w={15} h={15} c="#444" />
        <Arrow className="ml-[3px]" />
      </SBtn>
      <SBtn className="ml-[3px] w-[36px]">
        <svg width="17" height="13" viewBox="0 0 17 13" className="shrink-0">
          <path d="M3 0v7M0 3.500h7" stroke="#444" />
          <rect x="6" y="7" width="9" height="4" fill="#333" />
        </svg>
        <Arrow className="ml-[3px]" />
      </SBtn>
      <SBtn className="ml-[3px] w-[73px]">跨图层选择</SBtn>
      <SBtn className="ml-[3px] w-[61px]">折线选择</SBtn>
      <span className="ml-[3px]">在此处输入该构件的特殊设计的钢筋</span>
      <div className="absolute left-[1639px] top-[1px] w-[113px] h-[24px] bg-black" />
      <span className="absolute left-[1839px] top-[7px] font-['Liberation_Sans',sans-serif]">500 FPS</span>
    </div>
  );
}

function TaskBar() {
  const items = ["w-[58px]", "w-[56px]", "w-[50px]", "w-[58px]", "w-[58px]", "w-[58px]", "w-[58px]"];
  return (
    <div className="h-[8px] shrink-0 bg-gradient-to-r from-[#4a7d43] via-[#6c9a5c] to-[#2e4a2c] border-t border-[#1d3a1d] flex items-start">
      <div className="ml-[12px] w-[30px] h-[8px] rounded-t-full bg-[#b8cfd8] border border-[#dfe9ec]" />
      <div className="ml-[18px] flex gap-[4px]">
        {items.map((c, i) => (
          <div key={i} className={c + " h-[8px] rounded-t-[2px] bg-[#a5c2a5] border border-[#d0e0d0]"} />
        ))}
      </div>
      <div className="ml-auto mr-[14px] w-[12px] h-[8px] bg-[#a5c2a5] border border-[#d0e0d0]" />
    </div>
  );
}

export default function App() {
  return (
    <div className="w-[1920px] h-[1048px] relative overflow-hidden flex flex-col bg-[#eeeeee] font-['Noto_Sans','Noto_Sans_CJK_SC',sans-serif] leading-[16px]">
      <TitleBar />
      <Ribbon />
      <div className="h-[29px] shrink-0 bg-[#c9ccd0] border-t-2 border-[#a5a8ac] flex items-center pl-[3px]">
        <Sel t="主屋面" className="w-[99px]" />
        <Sel t="其它" className="ml-[6px] w-[95px]" />
        <Sel t="栏板" className="ml-[10px] w-[96px]" />
      </div>
      <div className="h-[843px] shrink-0 flex">
        <Nav />
        <div className="w-[416px] ml-[4px] shrink-0 flex flex-col">
          <MemberPanel />
          <div className="h-[4px] shrink-0" />
          <PropPanel />
        </div>
        <div className="w-[1056px] ml-[4px] shrink-0 flex flex-col">
          <div className="h-[375px] shrink-0 relative">
            <Scene />
            <ToolStrip />
          </div>
          <div className="h-[6px] shrink-0 bg-white flex justify-center">
            <div className="w-[100px] h-[4px] bg-[#5f6b75]" />
          </div>
          <EditPanel />
        </div>
        <RightPanel />
      </div>
      <StatusBar />
      <TaskBar />
      <Dialog />
    </div>
  );
}
